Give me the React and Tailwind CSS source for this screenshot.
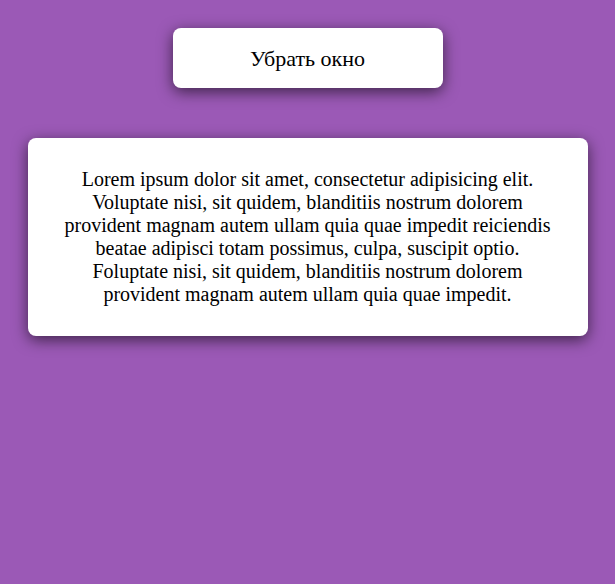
export default function App() {
  return (
    <div
      className="min-h-screen bg-[#9b59b6] flex flex-col items-center pt-[28px]"
      style={{ fontFamily: '"Liberation Serif", "Times New Roman", serif' }}
    >
      <button className="w-[270px] h-[60px] bg-white rounded-lg text-[22px] text-black shadow-[0_4px_15px_rgba(0,0,0,0.6)]">
        Убрать окно
      </button>

      <div className="mt-[50px] w-[560px] bg-white rounded-lg px-[30px] py-[30px] text-center text-[20px] leading-[23px] text-black shadow-[0_4px_15px_rgba(0,0,0,0.6)]">
        Lorem ipsum dolor sit amet, consectetur adipisicing elit. Voluptate
        nisi, sit quidem, blanditiis nostrum dolorem provident magnam autem
        ullam quia quae impedit reiciendis beatae adipisci totam possimus,
        culpa, suscipit optio. Foluptate nisi, sit quidem, blanditiis nostrum
        dolorem provident magnam autem ullam quia quae impedit.
      </div>
    </div>
  );
}
